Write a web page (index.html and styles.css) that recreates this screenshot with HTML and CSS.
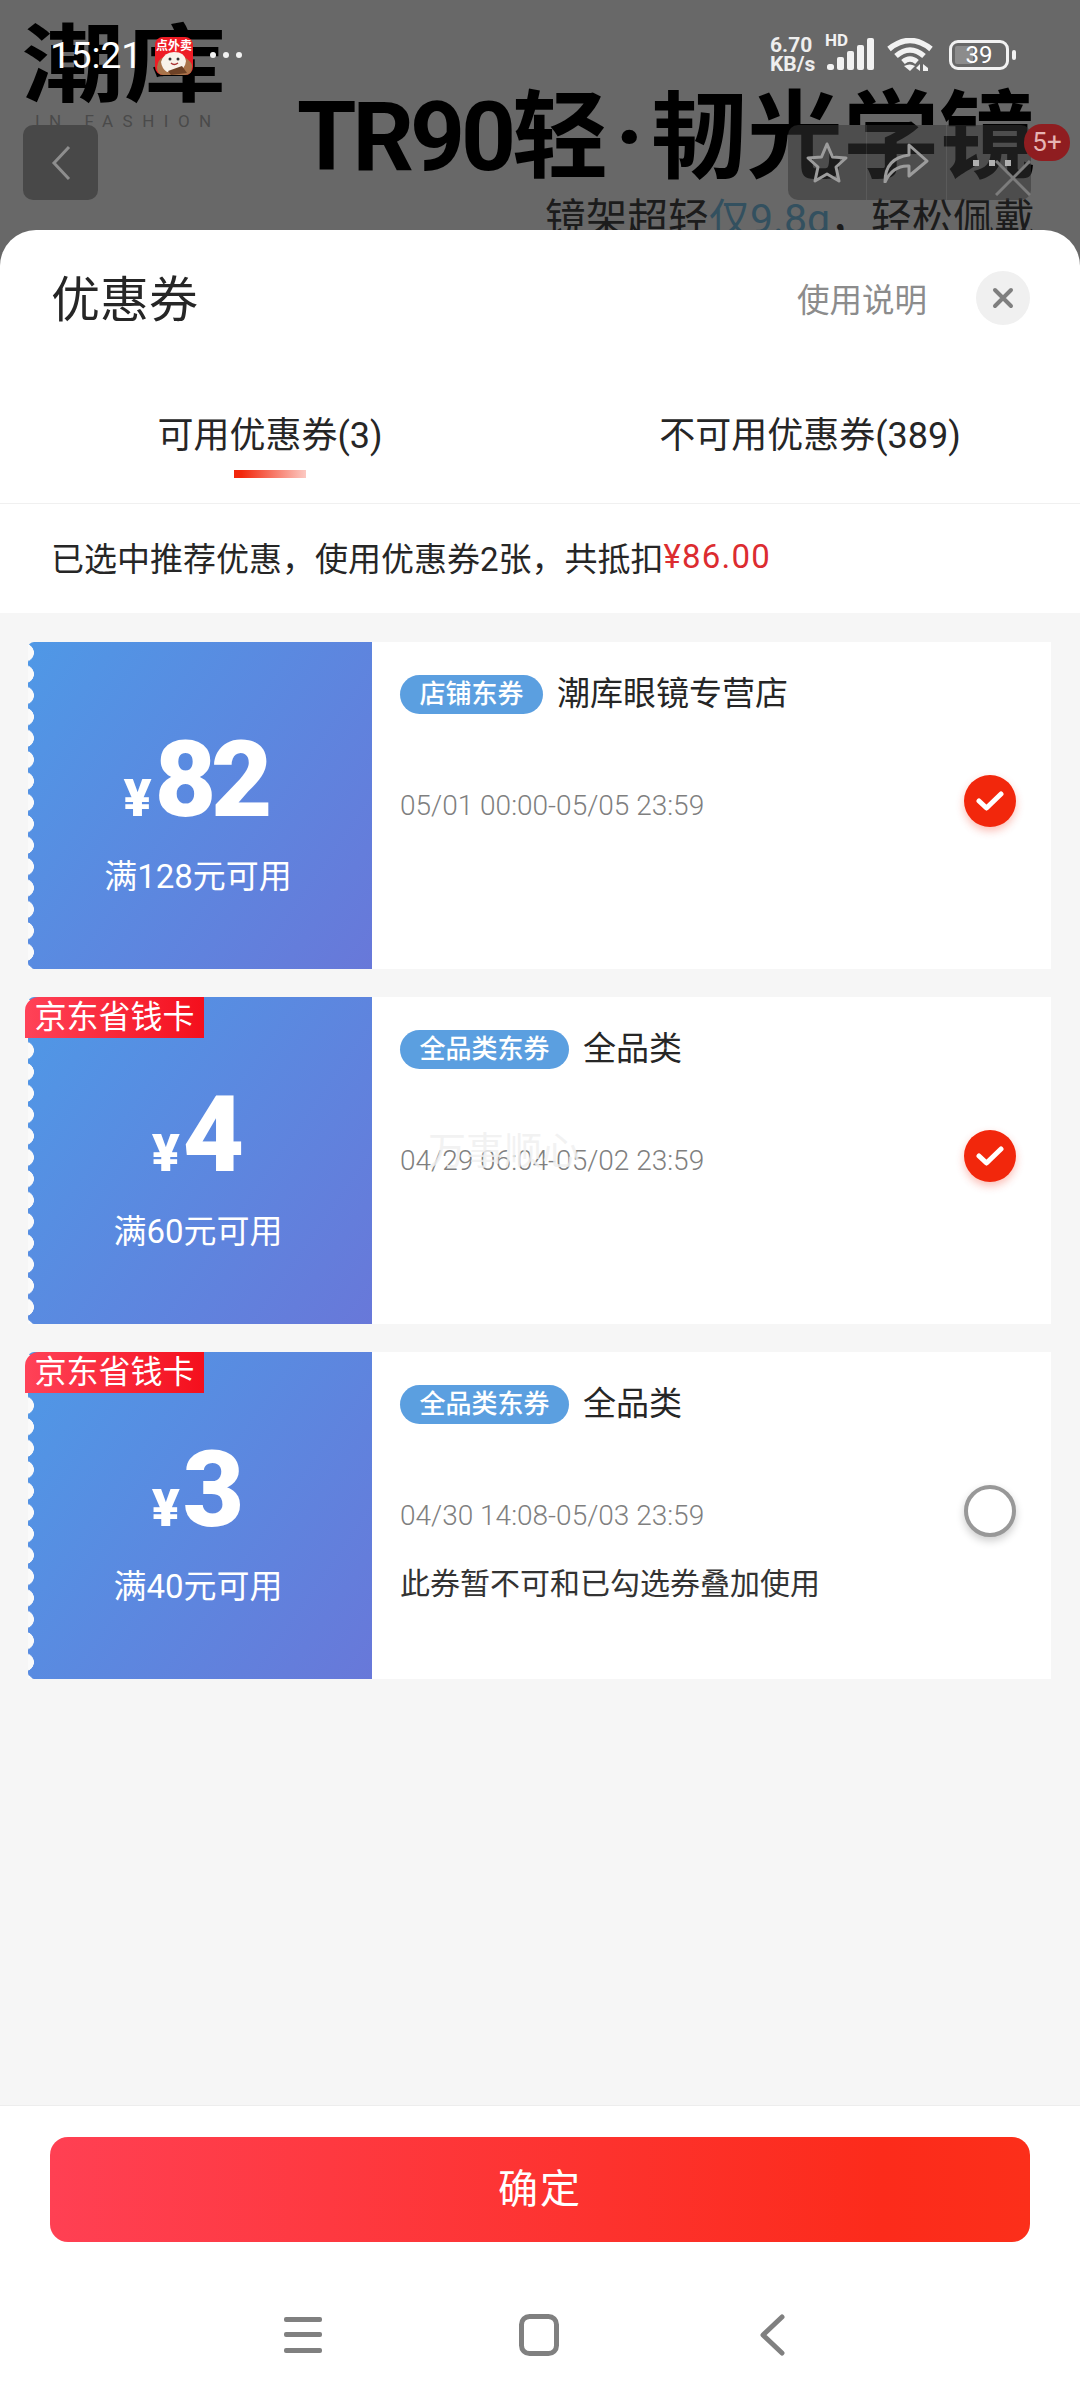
FILE: index.html
```html
<!DOCTYPE html>
<html lang="zh-CN">
<head>
    <meta charset="UTF-8">
    <title>优惠券</title>
    <link rel="stylesheet" href="styles.css">
</head>
<body>
    <div class="hero">
        <div class="brand">
            <div class="brand-name">潮库</div>
            <div class="brand-sub">IN FASHION</div>
        </div>
        <div class="promo">
            <div class="promo-title"><span class="promo-latin">TR90</span>轻<span class="promo-dot">·</span>韧光学镜</div>
            <div class="promo-sub">镜架超轻<span class="promo-blue">仅9.8g</span>，轻松佩戴</div>
        </div>

        <div class="status">
            <span class="time">15:21</span>
            <svg class="app-icon" width="38" height="38" viewBox="0 0 38 38">
                <rect width="38" height="38" rx="8" fill="#ee1c25"/>
                <path d="M2 30Q3 22 9 20L29 20Q36 24 37 28V30Q37 38 30 38H8Q2 38 2 30Z" fill="#a9744a"/>
                <path d="M6 25Q9 15 19 15Q30 15 31 24Q30 33 22 34L12 35Q7 32 6 25Z" fill="#f8f2ea"/>
                <path d="M13 34L27 29L32 36L16 38Z" fill="#6e4226"/>
                <circle cx="15" cy="22" r="1.5" fill="#333"/>
                <circle cx="23" cy="22" r="1.5" fill="#333"/>
                <path d="M16 26Q19 29 23 26" fill="none" stroke="#a33" stroke-width="1.4"/>
                <text class="app-icon-text" x="19" y="13" text-anchor="middle">点外卖</text>
            </svg>
            <span class="status-dots"><i></i><i></i><i></i></span>
            <div class="status-right">
                <div class="speed">6.70<br>KB/s</div>
                <div class="signal">
                    <span class="hd">HD</span>
                    <svg width="48" height="32" viewBox="0 0 48 32" fill="#f2f2f2">
                        <rect x="0" y="26" width="7" height="6" rx="2.5"/>
                        <rect x="10" y="19" width="7" height="13" rx="2"/>
                        <rect x="20" y="13" width="7" height="19" rx="2"/>
                        <rect x="30" y="7" width="7" height="25" rx="2"/>
                        <rect x="40" y="0" width="7" height="32" rx="2"/>
                    </svg>
                </div>
                <svg class="wifi" width="46" height="34" viewBox="0 0 46 34" fill="none" stroke="#f2f2f2" stroke-width="5.5">
                    <path d="M2 11Q23 -6 44 11"/>
                    <path d="M9 18Q23 6 37 18"/>
                    <path d="M16 24Q23 18 30 24"/>
                    <path d="M23 33L17 28Q23 25 28 28Z" fill="#f2f2f2" stroke="none"/>
                    <path d="M33 33V26L29 30ZM36 33V26L41 30V33Z" fill="#f2f2f2" stroke="none"/>
                </svg>
                <div class="battery">
                    <div class="battery-body">
                        <span class="battery-fill"></span>
                        <span class="battery-num">39</span>
                    </div>
                    <span class="battery-tip"></span>
                </div>
            </div>
        </div>

        <div class="nav-back">
            <svg width="20" height="36" viewBox="0 0 20 36" fill="none" stroke="#8e8e8e" stroke-width="3">
                <path d="M18 2L3 18L18 34"/>
            </svg>
        </div>
        <div class="capsule">
            <div class="capsule-item">
                <svg width="44" height="42" viewBox="0 0 44 42" fill="none" stroke="#9c9c9c" stroke-width="3" stroke-linejoin="round">
                    <path d="M22 2L27.5 15L41 16L31 25L34 39L22 32L10 39L13 25L3 16L16.5 15Z"/>
                </svg>
            </div>
            <div class="capsule-item">
                <svg width="46" height="40" viewBox="0 0 46 40" fill="none" stroke="#9c9c9c" stroke-width="3" stroke-linejoin="round">
                    <path d="M2 39Q2 15 26 12V2L44 18L26 33V23Q10 22 2 39Z"/>
                </svg>
            </div>
            <div class="capsule-item capsule-more"><i></i><i></i><i></i></div>
        </div>
        <svg class="hero-close" width="36" height="36" viewBox="0 0 36 36" stroke="#7c7c7c" stroke-width="3">
            <path d="M1 35L35 1M1 1L35 35"/>
        </svg>
        <div class="badge">5+</div>
    </div>

    <div class="sheet">
        <div class="sheet-header">
            <div class="sheet-title">优惠券</div>
            <div class="sheet-help">使用说明</div>
            <div class="sheet-close">
                <svg width="22" height="22" viewBox="0 0 22 22" stroke="#7f7f7f" stroke-width="4" stroke-linecap="round">
                    <path d="M3 3L19 19M19 3L3 19"/>
                </svg>
            </div>
        </div>

        <div class="tabs">
            <div class="tab">
                <span>可用优惠券(3)</span>
                <i class="tab-line"></i>
            </div>
            <div class="tab">
                <span>不可用优惠券(389)</span>
            </div>
        </div>

        <div class="notice">已选中推荐优惠，使用优惠券2张，共抵扣<span class="notice-price">¥86.00</span></div>

        <div class="list">
            <div class="coupon">
                <div class="coupon-left">
                    <div class="amount"><span class="yen">¥</span><span class="num">82</span></div>
                    <div class="limit">满128元可用</div>
                </div>
                <div class="coupon-right">
                    <div class="coupon-head">
                        <span class="pill">店铺东券</span>
                        <span class="coupon-name">潮库眼镜专营店</span>
                    </div>
                    <div class="coupon-date">05/01 00:00-05/05 23:59</div>
                    <div class="check check-on">
                        <svg width="28" height="22" viewBox="0 0 28 22" fill="none" stroke="#fff" stroke-width="5" stroke-linecap="round" stroke-linejoin="round">
                            <path d="M3 11L10.5 18L25 4"/>
                        </svg>
                    </div>
                </div>
            </div>

            <div class="coupon">
                <div class="tag">京东省钱卡</div>
                <div class="coupon-left">
                    <div class="amount"><span class="yen">¥</span><span class="num">4</span></div>
                    <div class="limit">满60元可用</div>
                </div>
                <div class="coupon-right">
                    <div class="coupon-head">
                        <span class="pill">全品类东券</span>
                        <span class="coupon-name">全品类</span>
                    </div>
                    <div class="coupon-date">04/29 06:04-05/02 23:59</div>
                    <div class="toast">万事顺心</div>
                    <div class="check check-on">
                        <svg width="28" height="22" viewBox="0 0 28 22" fill="none" stroke="#fff" stroke-width="5" stroke-linecap="round" stroke-linejoin="round">
                            <path d="M3 11L10.5 18L25 4"/>
                        </svg>
                    </div>
                </div>
            </div>

            <div class="coupon">
                <div class="tag">京东省钱卡</div>
                <div class="coupon-left">
                    <div class="amount"><span class="yen">¥</span><span class="num">3</span></div>
                    <div class="limit">满40元可用</div>
                </div>
                <div class="coupon-right">
                    <div class="coupon-head">
                        <span class="pill">全品类东券</span>
                        <span class="coupon-name">全品类</span>
                    </div>
                    <div class="coupon-date">04/30 14:08-05/03 23:59</div>
                    <div class="coupon-tip">此券暂不可和已勾选券叠加使用</div>
                    <div class="check check-off"></div>
                </div>
            </div>
        </div>

        <div class="footer">
            <div class="confirm">确定</div>
            <div class="navbar">
                <svg width="38" height="36" viewBox="0 0 38 36" fill="#808080">
                    <rect y="0" width="38" height="5" rx="2"/>
                    <rect y="15" width="38" height="5" rx="2"/>
                    <rect y="31" width="38" height="5" rx="2"/>
                </svg>
                <svg width="40" height="42" viewBox="0 0 40 42" fill="none" stroke="#808080" stroke-width="5">
                    <rect x="2.5" y="2.5" width="35" height="37" rx="8"/>
                </svg>
                <svg class="navbar-back" width="26" height="42" viewBox="0 0 26 42" fill="none" stroke="#808080" stroke-width="5" stroke-linecap="round" stroke-linejoin="round">
                    <path d="M23 3L4 21L23 39"/>
                </svg>
            </div>
        </div>
    </div>
</body>
</html>
```

FILE: styles.css
```css
* {
    box-sizing: border-box;
}
html, body {
    margin: 0;
    padding: 0;
}
body {
    width: 1080px;
    height: 2400px;
    overflow: hidden;
    display: flex;
    flex-direction: column;
    background: #686868;
    font-family: Roboto, "Noto Sans CJK SC", sans-serif;
    color: #262626;
}

/* dimmed page behind the sheet */
.hero {
    position: relative;
    height: 230px;
    flex-shrink: 0;
    overflow: hidden;
    display: flex;
    justify-content: space-between;
    padding: 0 45px 0 22px;
    background: #686868;
}
.brand {
    padding-top: 21px;
}
.brand-name {
    height: 90px;
    font-size: 102px;
    line-height: 90px;
    font-weight: 700;
    color: #000;
    white-space: nowrap;
    transform: scaleY(0.84);
}
.brand-sub {
    font-size: 17px;
    line-height: 20px;
    letter-spacing: 9.5px;
    color: #4a4a4a;
    padding-left: 13px;
}
.promo {
    padding-top: 79px;
    text-align: right;
}
.promo-title {
    font-size: 96px;
    line-height: 116px;
    font-weight: 700;
    color: #000;
    white-space: nowrap;
}
.promo-latin {
    letter-spacing: -4px;
}
.promo-dot {
    margin: 0 7px;
}
.promo-sub {
    font-size: 41px;
    line-height: 48px;
    color: #1c1c1c;
    white-space: nowrap;
}
.promo-blue {
    color: #33505f;
}

.status {
    position: absolute;
    top: 30px;
    left: 50px;
    right: 64px;
    height: 50px;
    display: flex;
    align-items: center;
    color: #f2f2f2;
}
.time {
    font-size: 37px;
    width: 105px;
    color: #fff;
}
.app-icon {
    margin-top: 1px;
}
.app-icon-text {
    font-size: 12px;
    font-weight: 700;
    fill: #fff;
}
.status-dots {
    display: flex;
    gap: 7px;
    margin-left: 17px;
}
.status-dots i {
    width: 6px;
    height: 6px;
    border-radius: 50%;
    background: #f2f2f2;
}
.status-right {
    margin-left: auto;
    display: flex;
    align-items: center;
}
.speed {
    font-size: 21px;
    line-height: 19px;
    font-weight: 700;
    width: 57px;
    color: #eee;
}
.signal {
    position: relative;
    width: 48px;
    height: 34px;
}
.hd {
    position: absolute;
    top: -6px;
    left: -2px;
    font-size: 17px;
    line-height: 16px;
    font-weight: 700;
}
.signal svg {
    display: block;
}
.wifi {
    margin-left: 12px;
}
.battery {
    display: flex;
    align-items: center;
    margin-left: 16px;
}
.battery-body {
    position: relative;
    width: 60px;
    height: 30px;
    border: 3px solid #f2f2f2;
    border-radius: 9px;
    display: flex;
    align-items: center;
    justify-content: center;
}
.battery-fill {
    position: absolute;
    left: 3px;
    top: 3px;
    bottom: 3px;
    width: 18px;
    border-radius: 2px;
    background: #8c8c8c;
}
.battery-num {
    position: relative;
    font-size: 24px;
    line-height: 24px;
    color: #fff;
}
.battery-tip {
    width: 4px;
    height: 10px;
    margin-left: 3px;
    border-radius: 2px;
    background: #f2f2f2;
}

.nav-back {
    position: absolute;
    left: 23px;
    top: 125px;
    width: 75px;
    height: 75px;
    border-radius: 10px;
    background: #484848;
    display: flex;
    align-items: center;
    justify-content: center;
}
.capsule {
    position: absolute;
    left: 788px;
    top: 125px;
    width: 243px;
    height: 75px;
    border-radius: 10px;
    background: rgba(54, 54, 54, 0.52);
    display: flex;
}
.capsule-item {
    flex: 1;
    display: flex;
    align-items: center;
    justify-content: center;
    border-right: 1px solid rgba(255, 255, 255, 0.08);
}
.capsule-item:last-child {
    border-right: none;
}
.capsule-more {
    gap: 10px;
    padding-left: 6px;
}
.capsule-more i {
    width: 6px;
    height: 6px;
    background: #b0b0b0;
}
.hero-close {
    position: absolute;
    left: 995px;
    top: 160px;
}
.badge {
    position: absolute;
    left: 1024px;
    top: 124px;
    width: 46px;
    height: 37px;
    border-radius: 18px;
    background: #8f1d20;
    color: #e6b4b4;
    font-size: 26px;
    line-height: 37px;
    text-align: center;
}

/* bottom sheet */
.sheet {
    flex: 1;
    display: flex;
    flex-direction: column;
    background: #fff;
    border-radius: 36px 36px 0 0;
    overflow: hidden;
}
.sheet-header {
    height: 136px;
    display: flex;
    align-items: center;
    padding: 0 50px 0 51px;
    flex-shrink: 0;
}
.sheet-title {
    font-size: 49px;
    line-height: 60px;
    margin-top: 6px;
    color: #262626;
}
.sheet-help {
    margin-left: auto;
    font-size: 32.5px;
    line-height: 44px;
    margin-top: 6px;
    color: #8c8c8c;
}
.sheet-close {
    width: 54px;
    height: 54px;
    margin-left: 49px;
    border-radius: 50%;
    background: #f0f0f0;
    display: flex;
    align-items: center;
    justify-content: center;
}
.tabs {
    height: 138px;
    display: flex;
    flex-shrink: 0;
    border-bottom: 1px solid #f0f0f0;
}
.tab {
    flex: 1;
    display: flex;
    flex-direction: column;
    align-items: center;
    padding-top: 46px;
    font-size: 36px;
    line-height: 48px;
    color: #262626;
}
.tab-line {
    width: 72px;
    height: 8px;
    margin-top: 10px;
    background: linear-gradient(90deg, #f2270c 0%, #f2270c 10%, rgba(242, 39, 12, 0.25) 100%);
}
.notice {
    height: 109px;
    display: flex;
    align-items: center;
    padding: 0 0 4px 51px;
    font-size: 33px;
    background: #fff;
    flex-shrink: 0;
}
.notice-price {
    color: #dc2c30;
    letter-spacing: 1.2px;
}

.list {
    flex: 1;
    display: flex;
    flex-direction: column;
    gap: 28px;
    padding: 29px 29px 0 28px;
    background: #f6f6f6;
}
.coupon {
    position: relative;
    height: 327px;
    display: flex;
    flex-shrink: 0;
}
.tag {
    position: absolute;
    left: -3px;
    top: 0;
    z-index: 1;
    width: 179px;
    height: 41px;
    border-radius: 14px 0 0 0;
    background: linear-gradient(90deg, #ff4258, #f40f1c);
    color: #fff;
    font-size: 32px;
    line-height: 41px;
    text-align: center;
    white-space: nowrap;
}
.coupon-left {
    position: relative;
    width: 344px;
    flex-shrink: 0;
    display: flex;
    flex-direction: column;
    align-items: center;
    background: linear-gradient(125deg, #4f98e6 0%, #6878d9 100%);
    color: #fff;
    border-radius: 6px 0 0 6px;
    padding: 85px 4px 0 0;
}
/* stamp edge */
.coupon-left::before {
    content: "";
    position: absolute;
    left: 0;
    top: 0;
    bottom: 0;
    width: 7px;
    background: radial-gradient(circle at -3px 50%, #fafafa 0, #fafafa 8.6px, transparent 9.2px) 0 0 / 7px 21.4px repeat-y;
}
.amount {
    display: flex;
    align-items: baseline;
    height: 106px;
}
.yen {
    font-size: 52px;
    line-height: 106px;
    font-weight: 900;
    margin-right: 3px;
}
.num {
    font-size: 106px;
    line-height: 106px;
    font-weight: 900;
    letter-spacing: -5px;
    padding-right: 5px;
}
.limit {
    font-size: 33px;
    line-height: 44px;
    margin-top: 22px;
}
.coupon-right {
    position: relative;
    flex: 1;
    background: #fff;
    padding: 33px 0 0 28px;
}
.coupon-head {
    display: flex;
    align-items: center;
    height: 39px;
}
.pill {
    height: 39px;
    padding: 0 19.5px;
    border-radius: 20px;
    background: #5b9fe0;
    color: #fff;
    font-size: 26px;
    line-height: 39px;
    font-weight: 500;
    white-space: nowrap;
}
.coupon-name {
    margin: -1px 0 0 14px;
    font-size: 33px;
    line-height: 44px;
    color: #262626;
}
.coupon-date {
    margin-top: 72px;
    font-size: 28px;
    line-height: 40px;
    font-weight: 300;
    color: #7f7f7f;
    white-space: nowrap;
}
.coupon-tip {
    margin-top: 26px;
    font-size: 30px;
    line-height: 44px;
    color: #333;
}
.toast {
    position: absolute;
    left: 56px;
    top: 131px;
    font-size: 38px;
    line-height: 46px;
    color: rgba(240, 240, 240, 0.85);
    white-space: nowrap;
}
.check {
    position: absolute;
    right: 35px;
    top: 133px;
    width: 52px;
    height: 52px;
    border-radius: 50%;
    display: flex;
    align-items: center;
    justify-content: center;
}
.check-on {
    background: #f2270c;
    box-shadow: 0 4px 8px rgba(242, 39, 12, 0.3);
}
.check-off {
    border: 4px solid #989898;
    background: #fff;
    box-shadow: 0 4px 8px rgba(0, 0, 0, 0.2);
}

.footer {
    height: 295px;
    flex-shrink: 0;
    border-top: 1px solid #ededed;
    background: #fff;
    padding: 31px 50px 0;
}
.confirm {
    height: 105px;
    border-radius: 18px;
    background: linear-gradient(90deg, #ff4053 0%, #fc2b1b 85%, #fc2f1a 100%);
    color: #fff;
    font-size: 40px;
    line-height: 105px;
    letter-spacing: 2px;
    text-align: center;
}
.navbar {
    display: flex;
    align-items: center;
    height: 42px;
    margin-top: 72px;
    padding-left: 234px;
    gap: 197px;
}
.navbar-back {
    margin-left: 3px;
}
```
